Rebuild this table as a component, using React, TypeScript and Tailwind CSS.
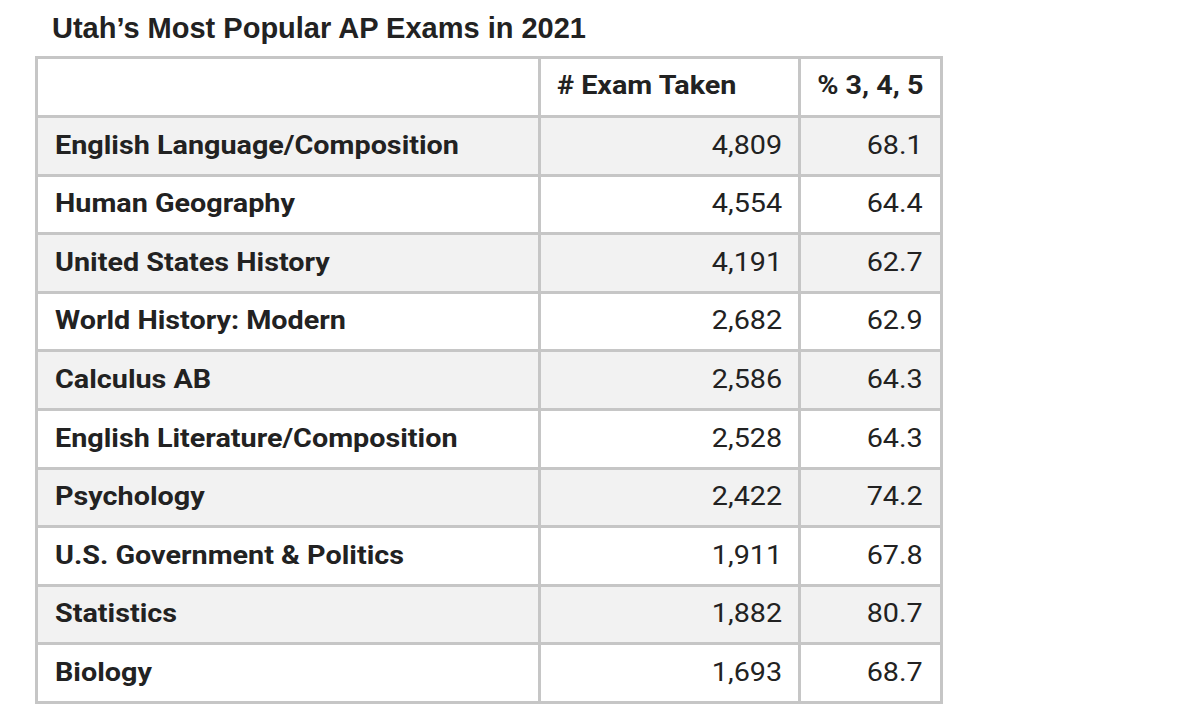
import React from "react";

const rows: [string, string, string][] = [
  ["English Language/Composition", "4,809", "68.1"],
  ["Human Geography", "4,554", "64.4"],
  ["United States History", "4,191", "62.7"],
  ["World History: Modern", "2,682", "62.9"],
  ["Calculus AB", "2,586", "64.3"],
  ["English Literature/Composition", "2,528", "64.3"],
  ["Psychology", "2,422", "74.2"],
  ["U.S. Government & Politics", "1,911", "67.8"],
  ["Statistics", "1,882", "80.7"],
  ["Biology", "1,693", "68.7"],
];

function L({ children }: { children: React.ReactNode }) {
  return <span className="inline-block origin-left scale-x-[1.15] whitespace-nowrap">{children}</span>;
}
function R({ children }: { children: React.ReactNode }) {
  return <span className="inline-block origin-right scale-x-[1.15] whitespace-nowrap">{children}</span>;
}

export default function App() {
  return (
    <div className="w-[1200px] h-[727px] bg-white text-[#222]">
      <div className="pl-[52px] pt-[11px] h-[56px]">
        <h1 className="text-[29px] leading-[34px] font-bold font-['Liberation_Sans',Arial,sans-serif]">
          Utah’s Most Popular AP Exams in 2021
        </h1>
      </div>
      <div className="pl-[35px]">
        <table className="border-collapse border-[3px] border-[#c6c6c6] font-['Roboto',sans-serif] text-[25px] table-fixed w-[905px]">
          <colgroup>
            <col className="w-[503px]" />
            <col className="w-[260px]" />
            <col className="w-[142px]" />
          </colgroup>
          <thead>
            <tr className="h-[59px]">
              <th className="border-[3px] border-[#c6c6c6] bg-white"></th>
              <th className="border-[3px] border-[#c6c6c6] bg-white font-bold text-left pl-[16px] pb-[3px]">
                <L># Exam Taken</L>
              </th>
              <th className="border-[3px] border-[#c6c6c6] bg-white font-bold text-right pr-[17px] pb-[3px]">
                <R>% 3, 4, 5</R>
              </th>
            </tr>
          </thead>
          <tbody>
            {rows.map((r, i) => (
              <tr key={r[0]} className={"h-[58.6px] " + (i % 2 === 0 ? "bg-[#f2f2f2]" : "bg-white")}>
                <td className="border-[3px] border-[#c6c6c6] font-bold pl-[17px] pb-[1px]">
                  <L>{r[0]}</L>
                </td>
                <td className="border-[3px] border-[#c6c6c6] text-right pr-[16px] pb-[1px]">
                  <R>{r[1]}</R>
                </td>
                <td className="border-[3px] border-[#c6c6c6] text-right pr-[17px] pb-[1px]">
                  <R>{r[2]}</R>
                </td>
              </tr>
            ))}
          </tbody>
        </table>
      </div>
    </div>
  );
}
